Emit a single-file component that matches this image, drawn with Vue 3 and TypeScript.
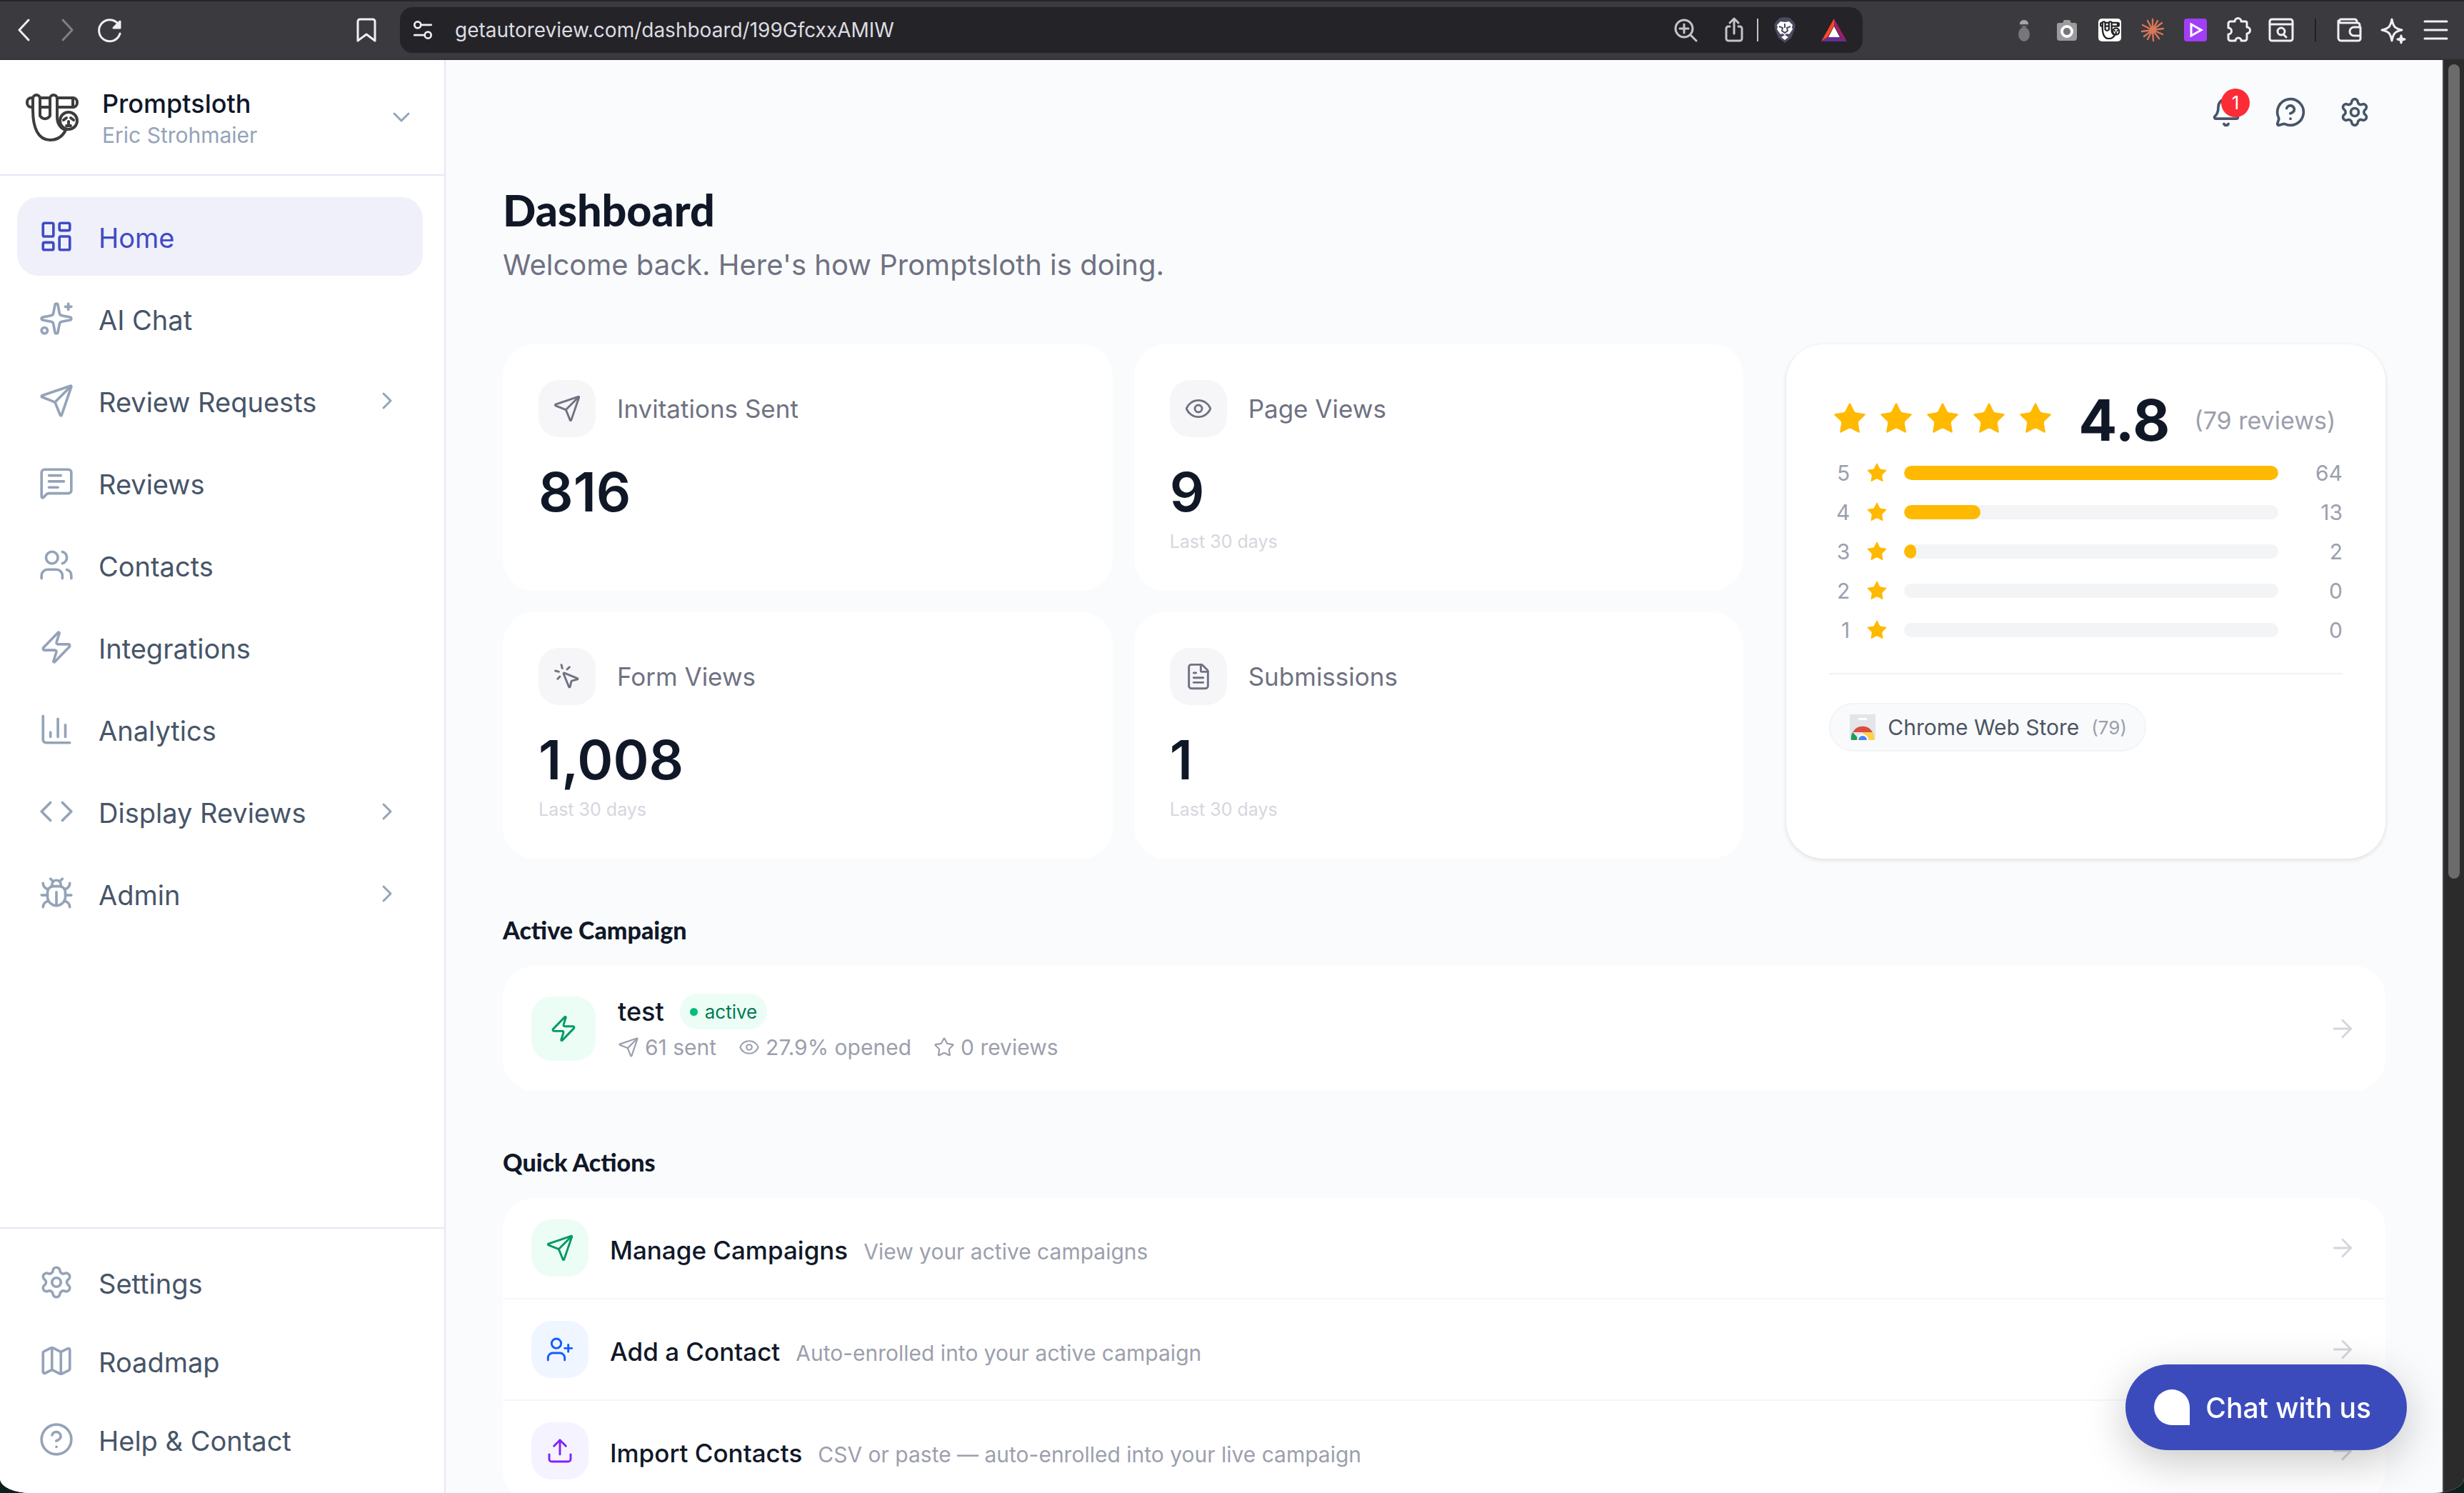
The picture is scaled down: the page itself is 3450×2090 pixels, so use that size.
<script setup lang="ts">
import { ref } from 'vue'

interface NavItem {
  label: string
  icon: string
  expandable?: boolean
  active?: boolean
}

interface Stat {
  label: string
  value: string
  icon: string
  note?: string
}

interface Action {
  title: string
  detail: string
  icon: string
  tone: string
}

const icons: Record<string, string> = {
  dashboard:
    '<rect width="7" height="9" x="3" y="3" rx="1"/><rect width="7" height="5" x="14" y="3" rx="1"/><rect width="7" height="9" x="14" y="12" rx="1"/><rect width="7" height="5" x="3" y="16" rx="1"/>',
  sparkles:
    '<path d="M11.017 2.814a1 1 0 0 1 1.966 0l1.051 5.558a2 2 0 0 0 1.594 1.594l5.558 1.051a1 1 0 0 1 0 1.966l-5.558 1.051a2 2 0 0 0-1.594 1.594l-1.051 5.558a1 1 0 0 1-1.966 0l-1.051-5.558a2 2 0 0 0-1.594-1.594l-5.558-1.051a1 1 0 0 1 0-1.966l5.558-1.051a2 2 0 0 0 1.594-1.594z"/><path d="M20 2v4"/><path d="M22 4h-4"/><circle cx="4" cy="20" r="2"/>',
  send: '<path d="M14.536 21.686a.5.5 0 0 0 .937-.024l6.5-19a.496.496 0 0 0-.635-.635l-19 6.5a.5.5 0 0 0-.024.937l7.93 3.18a2 2 0 0 1 1.112 1.11z"/><path d="m21.854 2.147-10.94 10.939"/>',
  message:
    '<path d="M22 17a2 2 0 0 1-2 2H6.828a2 2 0 0 0-1.414.586l-2.202 2.202A.71.71 0 0 1 2 21.286V5a2 2 0 0 1 2-2h16a2 2 0 0 1 2 2z"/><path d="M7 11h10"/><path d="M7 15h6"/><path d="M7 7h8"/>',
  users:
    '<path d="M16 21v-2a4 4 0 0 0-4-4H6a4 4 0 0 0-4 4v2"/><path d="M16 3.128a4 4 0 0 1 0 7.744"/><path d="M22 21v-2a4 4 0 0 0-3-3.87"/><circle cx="9" cy="7" r="4"/>',
  zap: '<path d="M4 14a1 1 0 0 1-.78-1.63l9.9-10.2a.5.5 0 0 1 .86.46l-1.92 6.02A1 1 0 0 0 13 10h7a1 1 0 0 1 .78 1.63l-9.9 10.2a.5.5 0 0 1-.86-.46l1.92-6.02A1 1 0 0 0 11 14z"/>',
  chart: '<path d="M3 3v16a2 2 0 0 0 2 2h16"/><path d="M18 17V9"/><path d="M13 17V5"/><path d="M8 17v-3"/>',
  code: '<path d="m16 18 6-6-6-6"/><path d="m8 6-6 6 6 6"/>',
  bug: '<path d="M12 20v-9"/><path d="M14 7a4 4 0 0 1 4 4v3a6 6 0 0 1-12 0v-3a4 4 0 0 1 4-4z"/><path d="M14.12 3.88 16 2"/><path d="M21 21a4 4 0 0 0-3.81-4"/><path d="M21 5a4 4 0 0 1-3.55 3.97"/><path d="M22 13h-4"/><path d="M3 21a4 4 0 0 1 3.81-4"/><path d="M3 5a4 4 0 0 0 3.55 3.97"/><path d="M6 13H2"/><path d="m8 2 1.88 1.88"/><path d="M9 7.13V6a3 3 0 1 1 6 0v1.13"/>',
  settings:
    '<path d="M9.671 4.136a2.34 2.34 0 0 1 4.659 0 2.34 2.34 0 0 0 3.319 1.915 2.34 2.34 0 0 1 2.33 4.033 2.34 2.34 0 0 0 0 3.831 2.34 2.34 0 0 1-2.33 4.033 2.34 2.34 0 0 0-3.319 1.915 2.34 2.34 0 0 1-4.659 0 2.34 2.34 0 0 0-3.32-1.915 2.34 2.34 0 0 1-2.33-4.033 2.34 2.34 0 0 0 0-3.831A2.34 2.34 0 0 1 6.35 6.051a2.34 2.34 0 0 0 3.319-1.915"/><circle cx="12" cy="12" r="3"/>',
  map: '<path d="M14.106 5.553a2 2 0 0 0 1.788 0l3.659-1.83A1 1 0 0 1 21 4.619v12.764a1 1 0 0 1-.553.894l-4.553 2.277a2 2 0 0 1-1.788 0l-4.212-2.106a2 2 0 0 0-1.788 0l-3.659 1.83A1 1 0 0 1 3 19.381V6.618a1 1 0 0 1 .553-.894l4.553-2.277a2 2 0 0 1 1.788 0z"/><path d="M15 5.764v15"/><path d="M9 3.236v15"/>',
  help: '<circle cx="12" cy="12" r="10"/><path d="M9.09 9a3 3 0 0 1 5.83 1c0 2-3 3-3 3"/><path d="M12 17h.01"/>',
  bell: '<path d="M10.268 21a2 2 0 0 0 3.464 0"/><path d="M3.262 15.326A1 1 0 0 0 4 17h16a1 1 0 0 0 .74-1.673C19.41 13.956 18 12.499 18 8A6 6 0 0 0 6 8c0 4.499-1.411 5.956-2.738 7.326"/>',
  question:
    '<path d="M2.992 16.342a2 2 0 0 1 .094 1.167l-1.065 3.29a1 1 0 0 0 1.236 1.168l3.413-.998a2 2 0 0 1 1.099.092 10 10 0 1 0-4.777-4.719"/><path d="M9.09 9a3 3 0 0 1 5.83 1c0 2-3 3-3 3"/><path d="M12 17h.01"/>',
  eye: '<path d="M2.062 12.348a1 1 0 0 1 0-.696 10.75 10.75 0 0 1 19.876 0 1 1 0 0 1 0 .696 10.75 10.75 0 0 1-19.876 0"/><circle cx="12" cy="12" r="3"/>',
  click:
    '<path d="M14 4.1 12 6"/><path d="m5.1 8-2.9-.8"/><path d="m6 12-1.9 2"/><path d="M7.2 2.2 8 5.1"/><path d="M9.037 9.69a.498.498 0 0 1 .653-.653l11 4.5a.5.5 0 0 1-.074.949l-4.349 1.041a1 1 0 0 0-.74.739l-1.04 4.35a.5.5 0 0 1-.95.074z"/>',
  file: '<path d="M6 22a2 2 0 0 1-2-2V4a2 2 0 0 1 2-2h8a2.4 2.4 0 0 1 1.704.706l3.588 3.588A2.4 2.4 0 0 1 20 8v12a2 2 0 0 1-2 2z"/><path d="M14 2v5a1 1 0 0 0 1 1h5"/><path d="M10 9H8"/><path d="M16 13H8"/><path d="M16 17H8"/>',
  star: '<path d="M11.525 2.295a.53.53 0 0 1 .95 0l2.31 4.679a2.123 2.123 0 0 0 1.595 1.16l5.166.756a.53.53 0 0 1 .294.904l-3.736 3.638a2.123 2.123 0 0 0-.611 1.878l.882 5.14a.53.53 0 0 1-.771.56l-4.618-2.428a2.122 2.122 0 0 0-1.973 0L6.396 21.01a.53.53 0 0 1-.77-.56l.881-5.139a2.122 2.122 0 0 0-.611-1.879L2.16 9.795a.53.53 0 0 1 .294-.906l5.165-.755a2.122 2.122 0 0 0 1.597-1.16z"/>',
  userPlus:
    '<path d="M16 21v-2a4 4 0 0 0-4-4H6a4 4 0 0 0-4 4v2"/><circle cx="9" cy="7" r="4"/><path d="M19 8v6"/><path d="M22 11h-6"/>',
  upload: '<path d="M12 3v12"/><path d="m17 8-5-5-5 5"/><path d="M21 15v4a2 2 0 0 1-2 2H5a2 2 0 0 1-2-2v-4"/>',
  arrow: '<path d="M5 12h14"/><path d="m12 5 7 7-7 7"/>',
  chevronRight: '<path d="m9 18 6-6-6-6"/>',
  chevronDown: '<path d="m6 9 6 6 6-6"/>',
}

// The sloth hanging from its branch, used by the account logo and the toolbar extension
const sloth =
  '<rect x="2" y="7" width="70" height="13" rx="6"/><path d="M66 7v13"/><path fill="#fff" d="M10 24V8a5 5 0 0 1 10 0v24a8 8 0 0 0 14 0V8a5 5 0 0 1 10 0v26c0 8 4 16 12 18-4 8-11 14-22 14C18 66 10 50 10 24z"/><circle fill="#fff" cx="60" cy="39" r="12"/><path d="M53 38l4-3M67 38l-4-3M60 40v3M57 46h6"/>'

const navItems: NavItem[] = [
  { label: 'Home', icon: 'dashboard', active: true },
  { label: 'AI Chat', icon: 'sparkles' },
  { label: 'Review Requests', icon: 'send', expandable: true },
  { label: 'Reviews', icon: 'message' },
  { label: 'Contacts', icon: 'users' },
  { label: 'Integrations', icon: 'zap' },
  { label: 'Analytics', icon: 'chart' },
  { label: 'Display Reviews', icon: 'code', expandable: true },
  { label: 'Admin', icon: 'bug', expandable: true },
]

const footerItems: NavItem[] = [
  { label: 'Settings', icon: 'settings' },
  { label: 'Roadmap', icon: 'map' },
  { label: 'Help & Contact', icon: 'help' },
]

const stats: Stat[] = [
  { label: 'Invitations Sent', value: '816', icon: 'send' },
  { label: 'Page Views', value: '9', icon: 'eye', note: 'Last 30 days' },
  { label: 'Form Views', value: '1,008', icon: 'click', note: 'Last 30 days' },
  { label: 'Submissions', value: '1', icon: 'file', note: 'Last 30 days' },
]

const ratings = [
  { stars: 5, count: 64 },
  { stars: 4, count: 13 },
  { stars: 3, count: 2 },
  { stars: 2, count: 0 },
  { stars: 1, count: 0 },
]
const mostRatings = Math.max(...ratings.map((r) => r.count))

const campaignFacts = [
  { icon: 'send', text: '61 sent' },
  { icon: 'eye', text: '27.9% opened' },
  { icon: 'star', text: '0 reviews' },
]

const actions: Action[] = [
  { title: 'Manage Campaigns', detail: 'View your active campaigns', icon: 'send', tone: 'green' },
  { title: 'Add a Contact', detail: 'Auto-enrolled into your active campaign', icon: 'userPlus', tone: 'blue' },
  { title: 'Import Contacts', detail: 'CSV or paste — auto-enrolled into your live campaign', icon: 'upload', tone: 'violet' },
]

const address = ref('getautoreview.com/dashboard/199GfcxxAMIW')
</script>

<template>
  <div class="window">
    <header class="toolbar">
      <div class="toolbar-nav">
        <button class="tool" aria-label="Back">
          <svg viewBox="0 0 40 40" class="line"><path d="M26 6 13 20l13 14" /></svg>
        </button>
        <button class="tool dim" aria-label="Forward">
          <svg viewBox="0 0 40 40" class="line"><path d="m14 6 13 14-13 14" /></svg>
        </button>
        <button class="tool" aria-label="Reload">
          <svg viewBox="0 0 40 40" class="line"><path d="M33 14A15 15 0 1 0 34 25" /><path fill="currentColor" d="M34 8v9h-9z" /></svg>
        </button>
        <button class="tool bookmark" aria-label="Bookmark">
          <svg viewBox="0 0 40 40" class="line"><path d="M11 5h18a3 3 0 0 1 3 3v27l-12-9-12 9V8a3 3 0 0 1 3-3z" /></svg>
        </button>
      </div>

      <div class="address">
        <button class="tool small" aria-label="Site settings">
          <svg viewBox="0 0 40 40" class="line"><circle cx="12" cy="12" r="5" /><path d="M17 12h16" /><circle cx="28" cy="28" r="5" /><path d="M23 28H7" /></svg>
        </button>
        <input v-model="address" type="text" aria-label="Address" />
        <button class="tool soft" aria-label="Zoom">
          <svg viewBox="0 0 40 40" class="line"><circle cx="18" cy="18" r="12" /><path d="m27 27 8 8M18 12v12M12 18h12" /></svg>
        </button>
        <button class="tool soft share" aria-label="Share">
          <svg viewBox="0 0 40 40" class="line"><path d="M14 15h-2a3 3 0 0 0-3 3v14a3 3 0 0 0 3 3h16a3 3 0 0 0 3-3V18a3 3 0 0 0-3-3h-2M20 25V4M14 10l6-6 6 6" /></svg>
        </button>
        <span class="address-rule"></span>
        <button class="tool" aria-label="Shields">
          <svg viewBox="0 0 40 40">
            <path fill="#4b4a61" d="m13 3 7-1 7 1 6 6 2 5-2 7-4 10-9 7-9-7-4-10-2-7 2-5z" />
            <path fill="#fff" d="m14 8 6 1 6-1 5 5-1 3 1 3-5 7-3-1-3 2-3-2-3 1-5-7 1-3-1-3z" />
            <path fill="#fff" d="m15 30 5-3 5 3-5 4z" />
            <path fill="none" stroke="#4b4a61" stroke-width="2" d="m12 15 5 2-1 4 4 3 4-3-1-4 5-2M20 11v6" />
          </svg>
        </button>
        <button class="tool rewards" aria-label="Rewards">
          <svg viewBox="0 0 40 40">
            <path fill="#ff4724" d="M20 4 2 36l9-6 9-16z" />
            <path fill="#9e1f63" d="m20 4 18 32-9-6-9-16z" />
            <path fill="#662d91" d="M2 36h36l-9-6H11z" />
            <path fill="#fff" d="m20 15 8 15H12z" />
          </svg>
        </button>
      </div>

      <div class="extensions">
        <button class="tool" aria-label="Bottle extension">
          <svg viewBox="0 0 40 40"><ellipse cx="20" cy="11" rx="6" ry="5" fill="#a5a5a8" /><ellipse cx="20" cy="26" rx="8" ry="10" fill="#77777b" /><path d="M14 12h12v3H14z" fill="#4a4a4e" /></svg>
        </button>
        <button class="tool" aria-label="Camera extension">
          <svg viewBox="0 0 40 40"><path fill="#9b9b9e" d="M6 13a3 3 0 0 1 3-3h5l2-4h8l2 4h5a3 3 0 0 1 3 3v18a4 4 0 0 1-4 4H10a4 4 0 0 1-4-4z" /><circle cx="20" cy="22" r="7" fill="none" stroke="#fff" stroke-width="4" /><circle cx="20" cy="22" r="5" fill="#77777b" /></svg>
        </button>
        <button class="tool" aria-label="Promptsloth extension">
          <svg viewBox="0 0 40 40"><rect x="4" y="4" width="32" height="32" rx="5" fill="#fff" /><svg x="6" y="7" width="28" height="26" viewBox="0 0 74 68" fill="none" stroke="#222" stroke-width="6" v-html="sloth"></svg></svg>
        </button>
        <button class="tool" aria-label="Claude extension">
          <svg viewBox="0 0 40 40" fill="none" stroke="#d97757" stroke-width="2.4" stroke-linecap="round"><path d="M20 20V5M20 20l7-13M20 20l13-10M20 20l15-2M20 20l14 6M20 20l9 12M20 20l1 15M20 20l-7 13M20 20 8 29M20 20 5 22M20 20 6 13M20 20 13 7" /></svg>
        </button>
        <button class="tool" aria-label="Player extension">
          <svg viewBox="0 0 40 40"><rect x="4" y="4" width="32" height="32" rx="4" fill="#a13ef8" /><path d="m14 12 14 8-14 8z" fill="none" stroke="#fff" stroke-width="3" /></svg>
        </button>
        <button class="tool" aria-label="Extensions">
          <svg viewBox="0 0 40 40" class="line"><path d="M15 8a4 4 0 0 1 9 0h6a2 2 0 0 1 2 2v6a4 4 0 0 1 0 9v7a3 3 0 0 1-3 3h-5a4 4 0 0 0-8 0H9a3 3 0 0 1-3-3v-6a4 4 0 0 0 0-9v-6a3 3 0 0 1 3-3z" /></svg>
        </button>
        <button class="tool" aria-label="Search tabs">
          <svg viewBox="0 0 40 40" class="line"><rect x="4" y="5" width="32" height="30" rx="3" /><path d="M4 12h32" /><circle cx="20" cy="22" r="5" /><path d="m23 26 4 4" /></svg>
        </button>
        <span class="ext-rule"></span>
        <button class="tool" aria-label="Wallet">
          <svg viewBox="0 0 40 40" class="line"><path d="M34 15v-2a3 3 0 0 0-3-3H7a3 3 0 0 1 0-5h20a3 3 0 0 1 3 3v2M4 7v24a4 4 0 0 0 4 4h24a3 3 0 0 0 3-3v-4M35 16h-9a6 6 0 0 0 0 12h9z" /></svg>
        </button>
        <button class="tool" aria-label="Assistant">
          <svg viewBox="0 0 40 40" class="line"><path d="M19 5c2 10 4 13 14 15-10 2-12 5-14 15-2-10-4-13-14-15C15 18 17 15 19 5z" /><path fill="currentColor" d="m32 28 1 4 4 1-4 1-1 4-1-4-4-1 4-1z" /></svg>
        </button>
        <button class="tool" aria-label="Menu">
          <svg viewBox="0 0 40 40" class="line"><path d="M5 8h31M5 20h31M5 32h31" /></svg>
        </button>
      </div>
    </header>

    <div class="page">
      <aside class="sidebar">
        <button class="account">
          <svg class="logo" viewBox="0 0 74 68" v-html="sloth"></svg>
          <span class="account-text">
            <strong>Promptsloth</strong>
            <span>Eric Strohmaier</span>
          </span>
          <svg class="icon chevron" viewBox="0 0 24 24" v-html="icons.chevronDown"></svg>
        </button>

        <nav class="menu" aria-label="Main">
          <a v-for="item in navItems" :key="item.label" href="#" class="menu-item" :class="{ active: item.active }">
            <svg class="icon" viewBox="0 0 24 24" v-html="icons[item.icon]"></svg>
            <span>{{ item.label }}</span>
            <svg v-if="item.expandable" class="icon chevron" viewBox="0 0 24 24" v-html="icons.chevronRight"></svg>
          </a>
        </nav>

        <nav class="menu-footer" aria-label="Support">
          <a v-for="item in footerItems" :key="item.label" href="#" class="menu-item">
            <svg class="icon" viewBox="0 0 24 24" v-html="icons[item.icon]"></svg>
            <span>{{ item.label }}</span>
          </a>
        </nav>
      </aside>

      <main class="content">
        <div class="utilities">
          <button class="utility" aria-label="Notifications">
            <svg class="icon" viewBox="0 0 24 24" v-html="icons.bell"></svg>
            <span class="badge">1</span>
          </button>
          <button class="utility" aria-label="Help">
            <svg class="icon" viewBox="0 0 24 24" v-html="icons.question"></svg>
          </button>
          <button class="utility" aria-label="Settings">
            <svg class="icon" viewBox="0 0 24 24" v-html="icons.settings"></svg>
          </button>
        </div>

        <h1>Dashboard</h1>
        <p class="welcome">Welcome back. Here's how Promptsloth is doing.</p>

        <div class="overview">
          <div class="stats">
            <article v-for="stat in stats" :key="stat.label" class="card stat">
              <div class="stat-head">
                <span class="tile"><svg class="icon" viewBox="0 0 24 24" v-html="icons[stat.icon]"></svg></span>
                <span>{{ stat.label }}</span>
              </div>
              <strong class="stat-value">{{ stat.value }}</strong>
              <span v-if="stat.note" class="stat-note">{{ stat.note }}</span>
            </article>
          </div>

          <article class="card rating">
            <div class="score">
              <span class="score-stars">
                <svg v-for="n in 5" :key="n" class="star" viewBox="0 0 24 24" v-html="icons.star"></svg>
              </span>
              <strong>4.8</strong>
              <span class="score-total">(79 reviews)</span>
            </div>
            <div v-for="row in ratings" :key="row.stars" class="rating-row">
              <span class="rating-stars">{{ row.stars }}</span>
              <svg class="star" viewBox="0 0 24 24" v-html="icons.star"></svg>
              <span class="track"><span class="fill" :style="{ width: (row.count / mostRatings) * 100 + '%' }"></span></span>
              <span class="rating-count">{{ row.count }}</span>
            </div>
            <hr />
            <a href="#" class="source">
              <svg viewBox="0 0 36 36">
                <path fill="#e3e5e8" d="M0 0h36v34a2 2 0 0 1-2 2H2a2 2 0 0 1-2-2z" />
                <rect x="12" y="5" width="12" height="3" rx="1" fill="#fff" />
                <path fill="#dd4b3e" d="M4 25a16 16 0 0 1 28 0z" />
                <path fill="#1f9d57" d="M4 25a16 16 0 0 0-2 11h12z" />
                <path fill="#ffd04b" d="M32 25H18l6 11h10a16 16 0 0 0-2-11z" />
                <path fill="#fff" d="M10 36a8 8 0 0 1 16 0z" />
                <path fill="#4285f4" d="M12 36a6 6 0 0 1 12 0z" />
              </svg>
              <span>Chrome Web Store</span>
              <small>(79)</small>
            </a>
          </article>
        </div>

        <section>
          <h2>Active Campaign</h2>
          <a href="#" class="card campaign">
            <span class="tile big green"><svg class="icon" viewBox="0 0 24 24" v-html="icons.zap"></svg></span>
            <span class="campaign-text">
              <span class="campaign-name"><strong>test</strong><span class="pill">active</span></span>
              <span class="facts">
                <span v-for="fact in campaignFacts" :key="fact.text" class="fact">
                  <svg class="icon" viewBox="0 0 24 24" v-html="icons[fact.icon]"></svg>{{ fact.text }}
                </span>
              </span>
            </span>
            <svg class="icon arrow" viewBox="0 0 24 24" v-html="icons.arrow"></svg>
          </a>
        </section>

        <section>
          <h2>Quick Actions</h2>
          <div class="card actions">
            <a v-for="action in actions" :key="action.title" href="#" class="action">
              <span class="tile" :class="action.tone"><svg class="icon" viewBox="0 0 24 24" v-html="icons[action.icon]"></svg></span>
              <span class="action-text"><strong>{{ action.title }}</strong><span>{{ action.detail }}</span></span>
              <svg class="icon arrow" viewBox="0 0 24 24" v-html="icons.arrow"></svg>
            </a>
          </div>
        </section>
      </main>

      <div class="scrollbar"><span class="thumb"></span></div>
    </div>

    <button class="chat"><span class="bubble"></span>Chat with us</button>
  </div>
</template>

<style>
html,
body {
  background: #0b1f1c;
  overflow: hidden;
}
</style>

<style scoped>
.window {
  display: flex;
  flex-direction: column;
  height: 100vh;
  overflow: hidden;
  background: #fafbfd;
  border-radius: 0 0 44px 44px / 0 0 20px 20px;
  font-family: Inter, 'Liberation Sans', sans-serif;
  color: #101828;
}

button {
  border: 0;
  padding: 0;
  margin: 0;
  background: none;
  font: inherit;
  color: inherit;
}

a {
  color: inherit;
  text-decoration: none;
}

svg {
  display: block;
  flex: none;
}

.icon {
  width: 40px;
  height: 40px;
  fill: none;
  stroke: currentColor;
  stroke-width: 1.75;
  stroke-linecap: round;
  stroke-linejoin: round;
}

/* Browser toolbar */
.toolbar {
  display: flex;
  flex: none;
  align-items: center;
  height: 84px;
  box-sizing: border-box;
  border-top: 2px solid #252429;
  border-bottom: 2px solid #323136;
  background: #3b3a3f;
  color: #f0f0f2;
}

.toolbar-nav {
  display: flex;
  gap: 20px;
  width: 560px;
  padding: 0 27px 0 14px;
  box-sizing: border-box;
}

.tool > svg {
  width: 40px;
  height: 40px;
}

.tool.small > svg {
  width: 36px;
  height: 36px;
}

.line {
  fill: none;
  stroke: currentColor;
  stroke-width: 3;
  stroke-linecap: round;
  stroke-linejoin: round;
}

.dim {
  color: #818086;
}

.soft {
  color: #c4c4c8;
}

.bookmark {
  margin-left: auto;
}

.address {
  display: flex;
  flex: 1;
  align-items: center;
  height: 64px;
  padding: 0 20px 0 14px;
  box-sizing: border-box;
  border-radius: 18px;
  background: #242328;
}

.address input {
  flex: 1;
  min-width: 0;
  margin: 0 27px;
  padding: 0;
  border: 0;
  outline: 0;
  background: none;
  color: #dcdce0;
  font: 400 28px/40px Inter, 'Liberation Sans', sans-serif;
}

.share {
  margin: 0 12px 0 28px;
}

.address-rule {
  width: 2px;
  height: 32px;
  margin-right: 17px;
  background: #c4c4c8;
}

.rewards {
  margin-left: 29px;
}

.extensions {
  display: flex;
  align-items: center;
  justify-content: flex-end;
  gap: 20px;
  width: 842px;
  padding-right: 20px;
  box-sizing: border-box;
}

.ext-rule {
  width: 2px;
  height: 32px;
  margin: 0 7px;
  background: #202024;
}

/* Page frame */
.page {
  display: flex;
  flex: 1;
  min-height: 0;
}

.sidebar {
  display: flex;
  flex: none;
  flex-direction: column;
  width: 624px;
  box-sizing: border-box;
  border-right: 2px solid #e6e7f6;
  background: #fff;
}

.account {
  display: flex;
  flex: none;
  align-items: center;
  height: 162px;
  padding: 0 40px 0 36px;
  border-bottom: 2px solid #e6e7f4;
  text-align: left;
}

.logo {
  width: 74px;
  height: 68px;
  fill: none;
  stroke: #3d3d3d;
  stroke-width: 4;
  stroke-linecap: round;
}

.account-text {
  display: flex;
  flex: 1;
  flex-direction: column;
  padding: 4px 0 0 33px;
  font-size: 30px;
  line-height: 42px;
  color: #94a3b8;
}

.account-text strong {
  font-size: 36px;
  line-height: 46px;
  font-weight: 500;
  color: #0f172a;
}

.chevron {
  margin-left: auto;
  color: #94a3b8;
}

.menu {
  display: flex;
  flex: 1;
  flex-direction: column;
  gap: 5px;
  padding: 30px 30px 0 24px;
}

.menu-item {
  display: flex;
  align-items: center;
  gap: 34px;
  height: 110px;
  padding: 0 30px;
  border-radius: 30px;
  font-size: 38px;
  color: #475569;
}

.menu-item > span {
  padding-top: 3px;
}

.menu-item > .icon:first-child {
  width: 50px;
  height: 50px;
  color: #94a3b8;
}

.menu-item.active,
.menu-item.active > .icon:first-child {
  color: #3f4bc4;
}

.menu-item.active {
  background: #f0f0fa;
}

.menu-footer {
  padding: 20px 30px 20px 24px;
  border-top: 2px solid #e6e7f6;
}

.content {
  flex: 1;
  min-width: 0;
  padding: 0 80px;
  overflow: hidden;
}

.scrollbar {
  flex: none;
  width: 30px;
  box-sizing: border-box;
  padding: 6px 6px 0;
  border-left: 2px solid #434748;
  background: #2b2b2b;
}

.thumb {
  display: block;
  width: 16px;
  height: 57%;
  border-radius: 8px;
  background: #6b6b6b;
}

/* Header */
.utilities {
  display: flex;
  align-items: center;
  justify-content: flex-end;
  gap: 46px;
  height: 146px;
  padding-right: 21px;
  color: #475569;
}

.utility {
  position: relative;
}

.utility .icon {
  width: 44px;
  height: 44px;
  stroke-width: 2;
}

.badge {
  position: absolute;
  top: -11px;
  right: -11px;
  width: 40px;
  height: 40px;
  border-radius: 50%;
  background: #fb2c36;
  color: #fff;
  font-size: 26px;
  line-height: 40px;
  text-align: center;
}

h1 {
  margin: 28px 0 0;
  font: 900 61px/72px Lato, sans-serif;
}

.welcome {
  margin: 13px 0 0;
  font-size: 40px;
  line-height: 56px;
  color: #6f7282;
}

/* Cards */
.card {
  border-radius: 44px;
  background: #fff;
}

.overview {
  display: grid;
  grid-template-columns: minmax(0, 29fr) minmax(0, 14fr);
  gap: 60px;
  margin-top: 83px;
}

.stats {
  display: grid;
  grid-template-columns: repeat(2, minmax(0, 1fr));
  gap: 30px;
}

.stat {
  display: flex;
  flex-direction: column;
  padding: 50px 50px 49px;
}

.stat-head {
  display: flex;
  align-items: center;
  gap: 30px;
  font-size: 35px;
  color: #6f7282;
}

.tile {
  display: flex;
  flex: none;
  align-items: center;
  justify-content: center;
  width: 80px;
  height: 80px;
  border-radius: 28px;
  background: #f6f6f9;
}

.big {
  width: 90px;
  height: 90px;
}

.green {
  background: #ecfdf5;
  color: #009966;
}

.blue {
  background: #eff6ff;
  color: #155dfc;
}

.violet {
  background: #f5f3ff;
  color: #7f22fe;
}

.stat-value {
  margin-top: 32px;
  font-size: 76px;
  line-height: 88px;
  font-weight: 600;
}

.stat-note {
  margin-top: 6px;
  font-size: 25px;
  line-height: 40px;
  color: #d5d6dd;
}

.rating {
  padding: 60px 60px 0;
  border-radius: 52px;
  box-shadow: 0 2px 6px rgba(0, 0, 0, 0.12);
}

.score {
  display: flex;
  align-items: center;
  height: 92px;
  gap: 34px;
}

.score-stars {
  display: flex;
  gap: 13px;
  padding: 0 0 4px 3px;
}

.star {
  width: 32px;
  height: 32px;
  fill: #ffb900;
}

.score .star {
  width: 52px;
  height: 52px;
}

.score strong {
  font-size: 80px;
  line-height: 92px;
  font-weight: 700;
}

.score-total {
  font-size: 34px;
  color: #9c9fad;
}

.rating-row {
  display: flex;
  align-items: center;
  gap: 22px;
  height: 55px;
  font-size: 30px;
  color: #9c9fad;
}

.rating-stars {
  width: 29px;
  text-align: right;
}

.rating-count {
  width: 68px;
  text-align: right;
}

.track {
  flex: 1;
  height: 20px;
  border-radius: 10px;
  background: #f3f4f6;
  overflow: hidden;
}

.fill {
  display: block;
  height: 100%;
  border-radius: 10px;
  background: #ffb900;
}

hr {
  height: 2px;
  margin: 33px 0 40px;
  border: 0;
  background: #f1f2f4;
}

.source {
  display: inline-flex;
  align-items: center;
  gap: 17px;
  height: 64px;
  padding: 0 25px 0 27px;
  border: 2px solid #f2f4f6;
  border-radius: 34px;
  background: #f9fafb;
  font-size: 30px;
  color: #4b5563;
}

.source svg {
  width: 36px;
  height: 36px;
}

.source small {
  font-size: 26px;
  color: #9c9fad;
}

/* Sections */
section {
  margin-top: 78px;
}

h2 {
  margin: 0 0 28px;
  font: 900 34px/44px Lato, sans-serif;
}

.campaign {
  display: flex;
  align-items: center;
  gap: 31px;
  padding: 39px 40px;
}

.campaign-text {
  display: flex;
  flex: 1;
  flex-direction: column;
  gap: 3px;
}

.campaign-name {
  display: flex;
  align-items: center;
  gap: 22px;
  height: 50px;
  font-size: 36px;
}

strong {
  font-weight: 500;
}

.pill {
  display: flex;
  align-items: center;
  gap: 10px;
  height: 50px;
  padding: 0 14px;
  border-radius: 25px;
  background: #ecfdf5;
  color: #007a55;
  font-size: 26px;
}

.pill::before {
  content: '';
  width: 11px;
  height: 11px;
  border-radius: 50%;
  background: #00bc7d;
}

.facts {
  display: flex;
  gap: 31px;
  font-size: 30px;
  line-height: 44px;
  color: #9c9fad;
}

.fact {
  display: flex;
  align-items: center;
  gap: 8px;
}

.fact .icon {
  width: 30px;
  height: 30px;
}

.arrow {
  color: #d4d6dc;
}

.action {
  display: flex;
  align-items: center;
  gap: 30px;
  padding: 30px 40px;
  border-bottom: 2px solid #f5f6f8;
}

.action-text {
  display: flex;
  flex: 1;
  align-items: baseline;
  gap: 22px;
  padding-top: 5px;
  font-size: 30px;
  color: #9c9fad;
}

.action-text strong {
  font-size: 35px;
  line-height: 48px;
  color: #101828;
}

.chat {
  position: fixed;
  right: 80px;
  bottom: 60px;
  display: flex;
  align-items: center;
  gap: 22px;
  height: 120px;
  padding: 0 50px 0 40px;
  border-radius: 60px;
  background: #3c4bbc;
  box-shadow: 0 16px 60px rgba(0, 0, 0, 0.22);
  color: #fff;
  font-size: 39px;
  font-weight: 500;
}

.bubble {
  width: 50px;
  height: 50px;
  border-radius: 25px 25px 0 25px;
  background: #fff;
}
</style>
